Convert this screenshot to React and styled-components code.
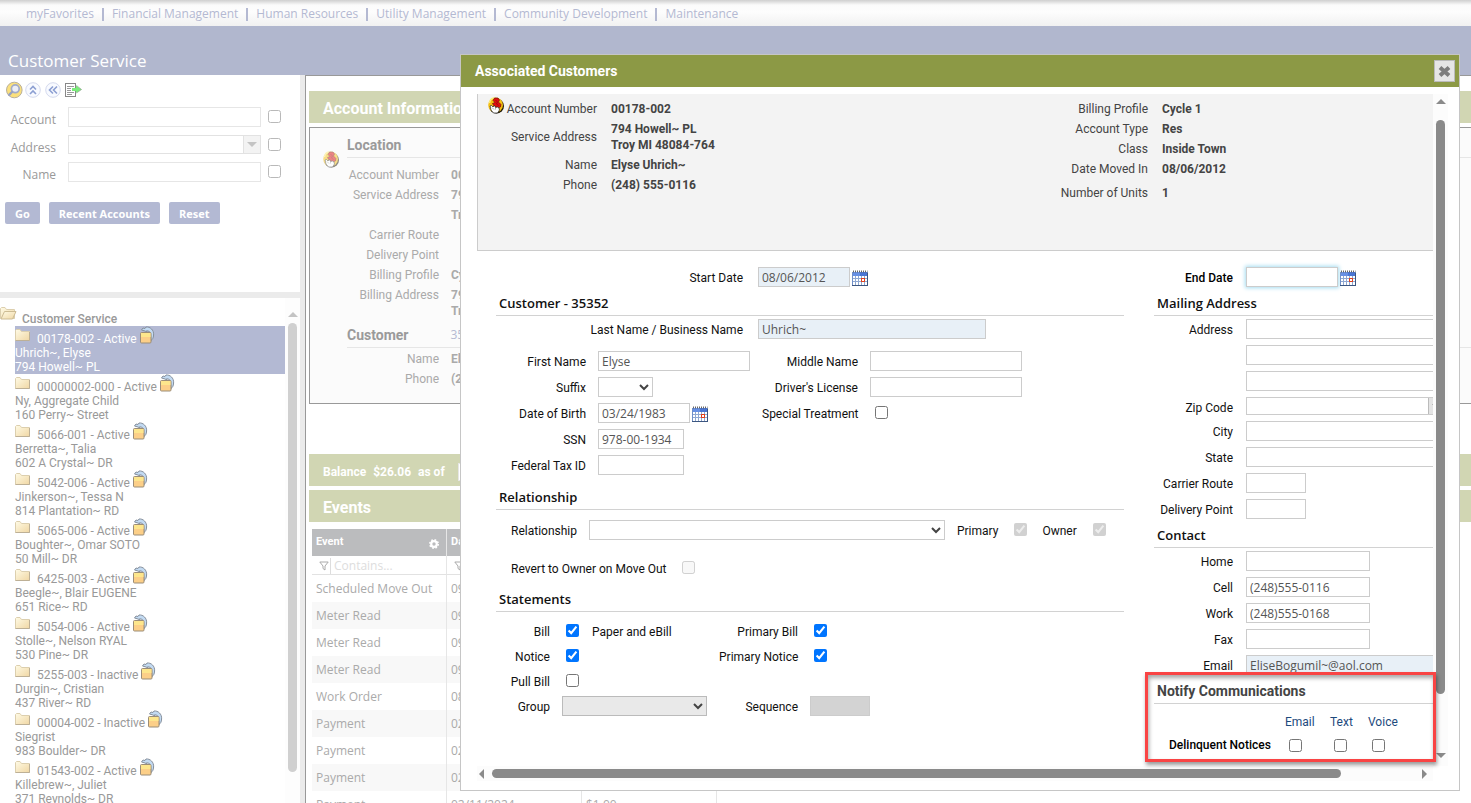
import React from 'react';
import styled, { createGlobalStyle, css } from 'styled-components';

const ui = '"Roboto", "Liberation Sans", sans-serif';
const humanist = '"Open Sans", "Noto Sans", sans-serif';

const GlobalStyle = createGlobalStyle`
  * { box-sizing: border-box; }
  html, body { margin: 0; height: 100%; overflow: hidden; background: #fff; }
  body { font: 12px/16px ${ui}; color: #999; }
  input, select, button { font: inherit; margin: 0; }
  ul, dl, dd, h1, h2, h3 { margin: 0; padding: 0; }
  svg { display: block; flex: none; }
`;

/* ---------- page frame ---------- */
const Page = styled.div`
  position: relative;
  height: 100vh;
  display: flex;
  flex-direction: column;
  overflow: hidden;
`;
const NavBar = styled.nav`
  flex: none;
  height: 26px;
  padding: 2px 0 0 26px;
  display: flex;
  align-items: center;
  background: linear-gradient(#cfcfcf, #fbfbfb 5px, #fdfdfd 12px, #f1f1f1);
  font: 12px/20px ${humanist};
`;
const NavLink = styled.a`
  color: #b4b9d2;
  text-decoration: none;
  & + &::before {
    content: '';
    display: inline-block;
    width: 2px;
    height: 13px;
    margin: 0 8px;
    vertical-align: -3px;
    background: #b4b9d2;
  }
`;
const TitleBar = styled.header`
  flex: none;
  height: 49px;
  padding: 23px 8px 0;
  background: #b1b7ce;
`;
const Title = styled.h1`
  font: 400 17px/24px ${humanist};
  color: #fff;
`;
const Columns = styled.div`
  flex: 1;
  min-height: 0;
  display: flex;
`;

/* ---------- side panel ---------- */
const Side = styled.aside`
  width: 305px;
  flex: none;
  display: flex;
  flex-direction: column;
  border-right: 5px solid #ebebeb;
`;
const Search = styled.form`
  flex: none;
  height: 223px;
  padding: 6px 5px 0;
  border-bottom: 6px solid #ebebeb;
  font: 12px/20px ${humanist};
`;
const Tools = styled.div`
  display: flex;
  gap: 4px;
  height: 26px;
`;
const ToolButton = styled.button`
  padding: 0;
  border: 0;
  width: 16px;
  height: 18px;
  background: none;
`;
const SearchRows = styled.div`
  display: grid;
  grid-template-columns: 51px 193px 13px;
  column-gap: 12px;
  row-gap: 8px;
  & > * + input[type='checkbox'] { margin-left: -5px; }
`;
const SearchLabel = styled.label`
  padding-top: 6px;
  text-align: right;
  line-height: 13px;
`;
const Tick = styled.input.attrs({ type: 'checkbox' })`
  width: 13px;
  height: 13px;
  margin-top: 3px;
  opacity: ${(p) => (p.$faded ? 0.5 : 1)};
`;
const SearchBox = styled.input`
  min-width: 0;
  height: 20px;
  border: 1px solid #e6e6e6;
  background: #fff;
`;
const Combo = styled.div`
  display: flex;
  height: ${(p) => (p.$strong ? '18px' : '19px')};
  border: 1px solid ${(p) => (p.$strong ? '#ccc' : '#e2e2e2')};
  input { flex: 1; min-width: 0; border: 0; background: #fff; }
  button {
    width: 17px;
    padding: 0;
    display: grid;
    place-items: center;
    border: 0;
    border-left: 1px solid ${(p) => (p.$strong ? '#bbb' : '#e2e2e2')};
    background: ${(p) => (p.$strong ? '#e4e4e4' : '#f3f3f3')};
  }
`;
const Actions = styled.div`
  display: flex;
  gap: 9px;
  padding-top: 20px;
`;
const ActionButton = styled.button`
  height: 22px;
  padding: 2px 10px 0;
  border: 0;
  border-radius: 2px;
  background: #b3b9d3;
  color: #fff;
  font: 700 11px/20px ${humanist};
`;
const TreeArea = styled.div`
  flex: 1;
  min-height: 0;
  display: flex;
  overflow: hidden;
`;
const Tree = styled.div`
  flex: 1;
  padding-top: 9px;
`;
const TreeRoot = styled.h2`
  display: flex;
  gap: 5px;
  height: 19px;
  font: 500 12px/16px ${ui};
  color: #999;
  span { padding-top: 4px; }
`;
const TreeList = styled.ul`
  list-style: none;
  margin-left: 15px;
`;
const TreeItem = styled.li`
  height: 48px;
  line-height: 14px;
  color: ${(p) => (p.$selected ? '#fff' : '#999')};
  background: ${(p) => (p.$selected ? '#b3b9d3' : 'transparent')};
`;
const TreeHead = styled.div`
  display: flex;
  height: 20px;
  & > span { padding: 6px 2px 0 6px; }
  & > svg:first-child { margin-top: 3px; }
`;
const VBar = styled.div`
  width: 15px;
  flex: none;
  display: flex;
  flex-direction: column;
  align-items: center;
  gap: ${(p) => (p.$strong ? '16px' : '6px')};
  padding: ${(p) => (p.$strong ? '5px 0 8px' : '14px 0 31px')};
  background: ${(p) => (p.$strong ? '#fcfcfc' : '#fdfdfd')};
`;
const HBar = styled.div`
  display: flex;
  align-items: center;
  gap: 8px;
  padding: 0 6px 0 2px;
  background: #fcfcfc;
`;
const Thumb = styled.div`
  border-radius: 5px;
  background: ${(p) => (p.$strong ? '#8a8a8a' : '#d0d0d0')};
  ${(p) => (p.$horizontal
    ? css`flex: 849; height: 9px;`
    : css`flex: 574; width: 9px;`)}
`;
const Slack = styled.div`
  flex: ${(p) => p.$grow};
`;

/* ---------- account page behind the dialog ---------- */
const Main = styled.main`
  flex: 1;
  min-width: 0;
  overflow: hidden;
  padding: 15px 0 0 3px;
  border-left: 1px solid #999;
  border-top: 1px solid #999;
`;
const Band = styled.h2`
  height: 32px;
  margin-bottom: 4px;
  padding: 3px 14px 0;
  display: flex;
  align-items: center;
  gap: ${(p) => (p.$small ? '7px' : '0')};
  background: #d1d6b3;
  color: #fff;
  font: 700 ${(p) => (p.$small ? '12px' : '16px')}/20px ${ui};
  input {
    width: 80px;
    height: 18px;
    margin-left: 6px;
    border: 1px solid #e6e6e6;
  }
`;
const AccountBox = styled.section`
  display: flex;
  gap: 8px;
  margin-bottom: 50px;
  padding: 7px 0 16px 13px;
  border: 1px solid #999;
  border-right: 0;
  background: #fbfbfb;
  & > svg { margin-top: 16px; }
`;
const AccountInfo = styled.div`
  flex: 1;
`;
const SubHeading = styled.h3`
  display: flex;
  gap: 42px;
  margin: ${(p) => p.$above || 0}px 0 ${(p) => p.$below}px;
  padding-bottom: 2px;
  border-bottom: 1px solid #e6e6e6;
  font: 700 14px/20px ${ui};
  color: #9a9a9a;
  a { font: 400 12px/20px ${humanist}; color: #b4b9d2; text-decoration: none; }
`;
const Facts = styled.dl`
  display: grid;
  grid-template-columns: ${(p) => p.$label || 92}px auto;
  justify-content: start;
  align-content: start;
  column-gap: ${(p) => p.$gap || 12}px;
  row-gap: 4px;
  color: ${(p) => p.$color || '#aaa'};
  dt { display: flex; justify-content: flex-end; align-items: flex-start; white-space: nowrap; min-height: 16px; }
  dd { font-weight: 700; }
`;
const Grid = styled.table`
  width: 405px;
  margin: 7px 0 0 3px;
  table-layout: fixed;
  border-collapse: separate;
  border-spacing: 0;
  font: 12px/16px ${humanist};
  color: #aaa;
  th, td { height: 27px; padding: 0 4px; text-align: left; border-right: 1px solid #e6e6e6; white-space: nowrap; }
  th { padding: 0 7px 0 4px; background: #bbbcbe; color: #fff; font: 700 11px/12px ${ui}; }
  td { padding-top: 1px; }
  tbody tr:nth-child(even) td { background: #f8f8f8; }
`;
const HeadCell = styled.div`
  display: flex;
  justify-content: space-between;
  align-items: flex-start;
  svg { margin-top: 3px; }
`;
const FilterRow = styled.tr`
  td { height: 19px; border-bottom: 1px solid #e2e2e2; padding: 1px 2px 0 7px; }
`;
const Filter = styled.div`
  display: flex;
  align-items: center;
  gap: 1px;
  input { width: 90px; height: 16px; padding: 0 3px; border: 0; border-left: 1px solid #ddd; background: none; }
  input::placeholder { color: #ddd; }
`;

/* ---------- dialog ---------- */
const Dialog = styled.section`
  position: absolute;
  inset: 54px 11px 12px 460px;
  display: flex;
  flex-direction: column;
  border: 1px solid #c6c6c6;
  background: #fff;
  color: #111;
`;
const DialogHead = styled.header`
  flex: none;
  height: 32px;
  padding: 0 4px 0 14px;
  display: flex;
  justify-content: space-between;
  align-items: center;
  background: #8c9945;
  color: #fff;
  h2 { font: 700 14px/20px ${ui}; }
`;
const CloseButton = styled.button`
  width: 21px;
  height: 22px;
  padding: 0;
  display: grid;
  place-items: center;
  border: 1px solid #bbb;
  background: #e6e6e6;
`;
const DialogBody = styled.div`
  flex: 1;
  min-height: 0;
  padding: 7px 11px 9px 16px;
  display: grid;
  grid-template-columns: minmax(0, 1fr) 15px;
  grid-template-rows: minmax(0, 1fr) 15px;
`;
const Viewport = styled.div`
  overflow: hidden;
`;
const Content = styled.div`
  width: 1050px;
`;
const Summary = styled.div`
  display: grid;
  grid-template-columns: 555px 1fr;
  height: 157px;
  padding: 7px 0 0 10px;
  border-left: 1px solid #ccc;
  border-bottom: 1px solid #ccc;
  background: #f3f3f3;
  dt { height: 16px; align-self: center; }
  dt svg { margin: -4px 3px 0 0; }
`;
const UnitsTerm = styled.dt`
  && { margin-top: 4px; }
`;
const UnitsValue = styled.dd`
  && { margin-top: 4px; }
`;
const Form = styled.form`
  display: grid;
  grid-template-columns: 628px 1fr;
  column-gap: 30px;
  padding: 16px 0 0 19px;
`;
const Heading = styled.h3`
  margin: ${(p) => p.$above}px 0 ${(p) => p.$below}px;
  padding: 0 3px 2px;
  border-bottom: 1px solid #d2d2d2;
  font: ${(p) => (p.$dark ? `700 14px/20px ${ui}` : `600 13px/20px ${humanist}`)};
  color: ${(p) => (p.$dark ? '#444' : '#111')};
`;
const Fields = styled.div`
  display: grid;
  grid-template-columns: ${(p) => p.$cols};
  grid-auto-rows: minmax(${(p) => p.$min || 18}px, auto);
  column-gap: ${(p) => p.$gap}px;
  row-gap: ${(p) => (p.$rows === undefined ? 6 : p.$rows)}px;
  margin-bottom: ${(p) => p.$below || 0}px;
  justify-content: start;
`;
const Label = styled.label`
  padding-top: 4px;
  line-height: 14px;
  text-align: ${(p) => (p.$left ? 'left' : 'right')};
  font-weight: ${(p) => (p.$strong ? 500 : 400)};
  color: ${(p) => (p.$strong ? '#000' : '#111')};
  white-space: nowrap;
`;
const Box = styled.input`
  width: ${(p) => p.$w}px;
  height: 20px;
  padding: 0 3px;
  border: 1px solid #ccc;
  outline: 0;
  background: ${(p) => (p.$tone === 'blue' ? '#e8f0f7' : p.$tone === 'grey' ? '#d3d3d3' : '#fff')};
  color: #555;
  font: 12px/16px ${humanist};
  box-shadow: ${(p) => (p.$glow ? '0 0 4px 1px #a5dcf0' : 'none')};
`;
const Pick = styled.select`
  width: ${(p) => p.$w}px;
  height: 20px;
  border: 1px solid ${(p) => (p.disabled ? '#bbb' : '#ccc')};
  border-radius: 0;
  background-color: ${(p) => (p.disabled ? '#e9e9e9' : '#fff')};
  color: #444;
  opacity: 1;
`;
const Inline = styled.div`
  display: flex;
  gap: ${(p) => p.$gap || 2}px;
  padding: 0 ${(p) => p.$after || 0}px 0 ${(p) => p.$indent || 0}px;
  & > svg { margin-top: 3px; }
`;
const RevertRow = styled.div`
  display: flex;
  gap: 15px;
  height: 19px;
  margin-top: 18px;
  padding-left: 15px;
`;
const Notices = styled.table`
  width: 244px;
  margin: 10px 0 0 15px;
  table-layout: fixed;
  border-spacing: 0;
  td, th { padding: 0; font-weight: 400; text-align: left; height: 16px; }
  thead th { color: #1d4a7d; }
  tbody th { font-weight: 500; color: #000; white-space: nowrap; }
  tbody tr > * { height: 30px; }
  input { display: block; margin: 0 0 0 4px; }
`;
const Callout = styled.div`
  position: absolute;
  right: 23px;
  bottom: 28px;
  width: 291px;
  height: 90px;
  border: 3px solid #f94444;
  box-shadow: 1px 3px 4px rgba(0, 0, 0, 0.4), inset 1px 3px 4px rgba(0, 0, 0, 0.35);
  pointer-events: none;
`;

/* ---------- drawings ---------- */
const Arrow = ({ dir, color }) => {
  const d = { up: 'M0 5L5 0L10 5Z', down: 'M0 0L5 5L10 0Z', left: 'M5 0L0 5L5 10Z', right: 'M0 0L5 5L0 10Z' }[dir];
  const flat = dir === 'up' || dir === 'down';
  return (
    <svg width={flat ? 10 : 5} height={flat ? 5 : 10} aria-hidden="true"><path d={d} fill={color} /></svg>
  );
};
const SearchIcon = () => (
  <svg width="18" height="18" viewBox="0 0 18 18">
    <circle cx="9.300" cy="9" r="7.800" fill="#fbe07c" stroke="#b9b09c" />
    <circle cx="10.300" cy="7.800" r="3.900" fill="#eceef6" stroke="#a3acc8" strokeWidth="1.700" />
    <path d="M7 11L4.200 13.800" stroke="#98a2c2" strokeWidth="2.400" strokeLinecap="round" />
  </svg>
);
const RoundChevrons = ({ up }) => (
  <svg width="16" height="18" viewBox="0 0 16 18">
    <circle cx="8" cy="9" r="7.3" fill="#f8faff" stroke="#d5daee" />
    <path
      d={up ? 'M5 8.500L8 5.500L11 8.500M5 13L8 10L11 13' : 'M8 5.500L4.500 9L8 12.500M12 5.500L8.500 9L12 12.500'}
      fill="none" stroke="#8c9fd2" strokeWidth="1.600"
    />
  </svg>
);
const ExportIcon = () => (
  <svg width="18" height="18" viewBox="0 0 18 18">
    <rect x="0.500" y="2.500" width="10" height="13" fill="#fff" stroke="#888" />
    <path d="M2 5.500H9M2 7.500H6M2 9.500H6M2 11.500H9M2 13.500H7" stroke="#999" />
    <path d="M7 7H11V4.500L16.500 8.500L11 12V10H7Z" fill="#7bec7b" />
    <path d="M11.500 4.500L16.500 8.500L11.500 12" fill="none" stroke="#8aa08a" strokeWidth=".7" />
  </svg>
);
const CoinIcon = ({ faded }) => (
  <svg width="16" height="17" viewBox="0 0 16 17" opacity={faded ? 0.5 : 1}>
    <circle cx="8.500" cy="9" r="7.500" fill="#221a08" />
    <circle cx="7.600" cy="8" r="7.400" fill="#f6c012" />
    <path d="M1.500 6C2 3 4 1.200 6 1" fill="none" stroke="#fdec7a" strokeWidth="1.500" />
    <path d="M5 3.500L6.500 1L10 1L11.500 3L10.500 5L13 7.500L12.500 10L10 11L6 9L4.500 6.500L7 5.500Z" fill="#e20d0d" stroke="#5c0a0a" strokeWidth=".6" />
    <path d="M7.500 3L9.500 5L8.500 7L10.500 8.500" fill="none" stroke="#8a0c0c" strokeWidth=".8" />
    <path d="M2 9L3.500 8.500L5 10L6.500 8.500L7.500 10.500L9.500 10L11 11L11.500 13L9.500 16L5.500 16L3 13Z" fill="#fff" stroke="#222" strokeWidth=".7" />
    <path d="M4 10.500L6 12.500M7.500 10.500L7.500 12.500" stroke="#777" strokeWidth=".6" />
  </svg>
);
const CalendarIcon = () => (
  <svg width="16" height="16" viewBox="0 0 16 16">
    <rect x="0.500" y="2.500" width="15" height="13" fill="#fff" stroke="#6f8fc8" />
    <rect x="1" y="2" width="14" height="4" fill="#6790e4" />
    <rect x="8" y="2" width="7" height="4" fill="#4a76d4" />
    <path d="M1 1.500H15.500" stroke="#666" strokeWidth="2" strokeDasharray="1 1" />
    <path d="M3.500 6V15M6.500 6V15M9.500 6V15M12.500 6V15M1 8.500H15M1 11.500H15" stroke="#8fa8d2" />
    <rect x="9.500" y="8.500" width="3" height="3" fill="#fff" stroke="#e0401c" />
    <path d="M0 15.500H16M15.500 3V16" stroke="#3c5680" />
  </svg>
);
const FolderIcon = ({ open }) => (
  <svg width={open ? 17 : 16} height="13" viewBox={open ? '0 0 17 13' : '0 0 16 13'}>
    <defs>
      <linearGradient id="folderFill" x1="0" y1="0" x2="1" y2="1">
        <stop offset="0" stopColor="#fffbe6" />
        <stop offset="1" stopColor="#f0d7a4" />
      </linearGradient>
    </defs>
    <path d="M0.500 11.500V1.500L1.500 0.500H5L6.500 2.500H14.500V11.500Z" fill="url(#folderFill)" stroke="#dccfae" />
    {open
      ? <path d="M1 12L4.500 4.500H16L12.500 12Z" fill="url(#folderFill)" stroke="#cdbc94" />
      : <path d="M0.500 11.500H14.500V3" fill="none" stroke="#bdb096" />}
  </svg>
);
const MoveIcon = () => (
  <svg width="16" height="18" viewBox="0 0 16 18">
    <path d="M2.500 4L4 2L6 2.500L7 1C11 0.500 15 4 14.600 9C14.400 12 13.500 13.500 12 14.500L11.500 7.500C11 5.500 9.500 4.800 7.500 4.800L8 6L6 5Z" fill="#c2daf2" stroke="#858f9c" />
    <rect x="1.500" y="6.500" width="10.500" height="10.500" rx="1" fill="#fccf88" stroke="#9b8d78" />
    <path d="M2 7H11.500V11H2Z" fill="#fde68c" />
  </svg>
);
const GearIcon = () => (
  <svg width="10" height="10" viewBox="0 0 10 10">
    <circle cx="5" cy="5" r="2.800" fill="none" stroke="#fff" strokeWidth="2.200" />
    <circle cx="5" cy="5" r="4.200" fill="none" stroke="#fff" strokeWidth="1.600" strokeDasharray="1.650 1.650" />
  </svg>
);
const FunnelIcon = () => (
  <svg width="10" height="10" viewBox="0 0 10 10">
    <path d="M0.800 1H9.200L6 5V9L4 7.500V5Z" fill="none" stroke="#aaa" />
  </svg>
);
const CloseIcon = () => (
  <svg width="13" height="13" viewBox="0 0 13 13">
    <path d="M2 2.500L11 10.500M11 2.500L2 10.500" stroke="#7d7d7d" strokeWidth="4" />
  </svg>
);

/* ---------- data ---------- */
const menu = ['myFavorites', 'Financial Management', 'Human Resources', 'Utility Management', 'Community Development', 'Maintenance'];
const accounts = [
  ['00178-002 - Active', 'Uhrich~, Elyse', '794 Howell~ PL'],
  ['00000002-000 - Active', 'Ny, Aggregate Child', '160 Perry~ Street'],
  ['5066-001 - Active', 'Berretta~, Talia', '602 A Crystal~ DR'],
  ['5042-006 - Active', 'Jinkerson~, Tessa N', '814 Plantation~ RD'],
  ['5065-006 - Active', 'Boughter~, Omar SOTO', '50 Mill~ DR'],
  ['6425-003 - Active', 'Beegle~, Blair EUGENE', '651 Rice~ RD'],
  ['5054-006 - Active', 'Stolle~, Nelson RYAL', '530 Pine~ DR'],
  ['5255-003 - Inactive', 'Durgin~, Cristian', '437 River~ RD'],
  ['00004-002 - Inactive', 'Siegrist', '983 Boulder~ DR'],
  ['01543-002 - Active', 'Killebrew~, Juliet', '371 Reynolds~ DR'],
];
const events = [
  ['Scheduled Move Out', '09', ''], ['Meter Read', '09', ''], ['Meter Read', '09', ''], ['Meter Read', '09', ''],
  ['Work Order', '08', ''], ['Payment', '02', ''], ['Payment', '02', ''], ['Payment', '02', ''],
  ['Payment', '02/11/2024', '$1.00'],
];

function SidePanel() {
  return (
    <Side>
      <Search>
        <Tools>
          <ToolButton type="button" aria-label="Search"><SearchIcon /></ToolButton>
          <ToolButton type="button" aria-label="Collapse up"><RoundChevrons up /></ToolButton>
          <ToolButton type="button" aria-label="Collapse left"><RoundChevrons /></ToolButton>
          <ToolButton type="button" aria-label="Export"><ExportIcon /></ToolButton>
        </Tools>
        <SearchRows>
          <SearchLabel htmlFor="s-account">Account</SearchLabel>
          <SearchBox id="s-account" />
          <Tick $faded aria-label="Keep account" />
          <SearchLabel htmlFor="s-address">Address</SearchLabel>
          <Combo>
            <input id="s-address" />
            <button type="button" aria-label="Show addresses"><Arrow dir="down" color="#c4c4c4" /></button>
          </Combo>
          <Tick $faded aria-label="Keep address" />
          <SearchLabel htmlFor="s-name">Name</SearchLabel>
          <SearchBox id="s-name" />
          <Tick $faded aria-label="Keep name" />
        </SearchRows>
        <Actions>
          <ActionButton type="button">Go</ActionButton>
          <ActionButton type="button">Recent Accounts</ActionButton>
          <ActionButton type="button">Reset</ActionButton>
        </Actions>
      </Search>
      <TreeArea>
        <Tree>
          <TreeRoot><FolderIcon open /><span>Customer Service</span></TreeRoot>
          <TreeList>
            {accounts.map(([head, name, street], i) => (
              <TreeItem key={head} $selected={i === 0}>
                <TreeHead><FolderIcon /><span>{head}</span><MoveIcon /></TreeHead>
                <div>{name}</div>
                <div>{street}</div>
              </TreeItem>
            ))}
          </TreeList>
        </Tree>
        <VBar><Arrow dir="up" color="#c4c4c4" /><Thumb /></VBar>
      </TreeArea>
    </Side>
  );
}

function AccountPage() {
  return (
    <Main>
      <Band>Account Information</Band>
      <AccountBox>
        <CoinIcon faded />
        <AccountInfo>
          <SubHeading $below={9}>Location</SubHeading>
          <Facts>
            <dt>Account Number</dt><dd>00178-002</dd>
            <dt>Service Address</dt><dd>794 Howell~ PL</dd>
            <dt /><dd>Troy MI</dd>
            <dt>Carrier Route</dt><dd />
            <dt>Delivery Point</dt><dd />
            <dt>Billing Profile</dt><dd>Cycle 1</dd>
            <dt>Billing Address</dt><dd>794<br />Troy</dd>
          </Facts>
          <SubHeading $above={6} $below={3}>Customer<a href="#customer">35352</a></SubHeading>
          <Facts>
            <dt>Name</dt><dd>Elyse</dd>
            <dt>Phone</dt><dd>(248)</dd>
          </Facts>
        </AccountInfo>
      </AccountBox>
      <Band $small>
        <label htmlFor="asof">Balance</label><span>$26.06</span><span>as of</span><input id="asof" />
      </Band>
      <Band>Events</Band>
      <Grid>
        <thead>
          <tr>
            <th><HeadCell>Event<GearIcon /></HeadCell></th>
            <th><HeadCell>Date<GearIcon /></HeadCell></th>
            <th><HeadCell>Amount<GearIcon /></HeadCell></th>
          </tr>
          <FilterRow>
            <td><Filter><FunnelIcon /><input placeholder="Contains..." aria-label="Filter events" /></Filter></td>
            <td><Filter><FunnelIcon /></Filter></td>
            <td />
          </FilterRow>
        </thead>
        <tbody>
          {events.map(([kind, date, amount], i) => (
            <tr key={i}><td>{kind}</td><td>{date}</td><td>{amount}</td></tr>
          ))}
        </tbody>
      </Grid>
    </Main>
  );
}

function DateField({ id, value, tone, glow }) {
  return (
    <Inline>
      <Box id={id} $w={92} $tone={tone} $glow={glow} defaultValue={value} />
      <CalendarIcon />
    </Inline>
  );
}

function LeftForm() {
  return (
    <div>
      <Fields $cols="247px auto" $gap={15}>
        <Label htmlFor="start">Start Date</Label>
        <DateField id="start" value="08/06/2012" tone="blue" />
      </Fields>
      <Heading $above={6} $below={3}>Customer - 35352</Heading>
      <Fields $cols="247px auto" $gap={15} $below={12}>
        <Label htmlFor="last">Last Name / Business Name</Label>
        <Box id="last" $w={228} $tone="blue" defaultValue="Uhrich~" />
      </Fields>
      <Fields $cols="90px 152px 96px auto" $gap={12}>
        <Label htmlFor="first">First Name</Label>
        <Box id="first" $w={152} defaultValue="Elyse" />
        <Label htmlFor="middle">Middle Name</Label>
        <Box id="middle" $w={152} />
        <Label htmlFor="suffix">Suffix</Label>
        <Pick id="suffix" $w={55} />
        <Label htmlFor="license">Driver's License</Label>
        <Box id="license" $w={152} />
        <Label htmlFor="dob">Date of Birth</Label>
        <DateField id="dob" value="03/24/1983" />
        <Label htmlFor="special">Special Treatment</Label>
        <Inline $indent={5}><Tick id="special" /></Inline>
        <Label htmlFor="ssn">SSN</Label>
        <Box id="ssn" $w={86} defaultValue="978-00-1934" />
        <span /><span />
        <Label htmlFor="tax">Federal Tax ID</Label>
        <Box id="tax" $w={86} />
      </Fields>
      <Heading $above={12} $below={10}>Relationship</Heading>
      <Inline $gap={12} $indent={15}>
        <Label htmlFor="relation">Relationship</Label>
        <Pick id="relation" $w={356} />
        <Label htmlFor="primary">Primary</Label>
        <Inline $indent={4} $after={3}><Tick id="primary" disabled defaultChecked /></Inline>
        <Label htmlFor="owner">Owner</Label>
        <Inline $indent={4}><Tick id="owner" disabled defaultChecked /></Inline>
      </Inline>
      <RevertRow>
        <Label htmlFor="revert">Revert to Owner on Move Out</Label>
        <Tick id="revert" disabled />
      </RevertRow>
      <Heading $above={12} $below={9}>Statements</Heading>
      <Fields $cols="54px 145px 79px auto" $gap={12} $rows={5} $min={20}>
        <Label htmlFor="bill">Bill</Label>
        <Inline $gap={13} $indent={4}>
          <Tick id="bill" defaultChecked />
          <Label as="span" $left>Paper and eBill</Label>
        </Inline>
        <Label htmlFor="pbill">Primary Bill</Label>
        <Inline $indent={4}><Tick id="pbill" defaultChecked /></Inline>
        <Label htmlFor="notice">Notice</Label>
        <Inline $indent={4}><Tick id="notice" defaultChecked /></Inline>
        <Label htmlFor="pnotice">Primary Notice</Label>
        <Inline $indent={4}><Tick id="pnotice" defaultChecked /></Inline>
        <Label htmlFor="pull">Pull Bill</Label>
        <Inline $indent={4}><Tick id="pull" /></Inline>
        <span /><span />
        <Label htmlFor="group">Group</Label>
        <Pick id="group" $w={145} disabled />
        <Label htmlFor="sequence">Sequence</Label>
        <Box id="sequence" $w={60} $tone="grey" disabled />
      </Fields>
    </div>
  );
}

function RightForm() {
  const cols = '79px minmax(0, 1fr)';
  return (
    <div>
      <Fields $cols={cols} $gap={13}>
        <Label htmlFor="end" $strong>End Date</Label>
        <DateField id="end" glow />
      </Fields>
      <Heading $above={6} $below={3}>Mailing Address</Heading>
      <Fields $cols={cols} $gap={13}>
        <Label htmlFor="addr1">Address</Label><Box id="addr1" $w={228} />
        <span /><Box aria-label="Address line 2" $w={228} />
        <span /><Box aria-label="Address line 3" $w={228} />
        <Label htmlFor="zip">Zip Code</Label>
        <ZipCombo $strong>
          <input id="zip" /><button type="button" aria-label="Show zip codes"><Arrow dir="down" color="#888" /></button>
        </ZipCombo>
        <Label htmlFor="city">City</Label><Box id="city" $w={228} />
        <Label htmlFor="state">State</Label><Box id="state" $w={228} />
        <Label htmlFor="route">Carrier Route</Label><Box id="route" $w={60} />
        <Label htmlFor="point">Delivery Point</Label><Box id="point" $w={60} />
      </Fields>
      <Heading $above={6} $below={3}>Contact</Heading>
      <Fields $cols={cols} $gap={13}>
        <Label htmlFor="home">Home</Label><Box id="home" $w={124} />
        <Label htmlFor="cell">Cell</Label><Box id="cell" $w={124} defaultValue="(248)555-0116" />
        <Label htmlFor="work">Work</Label><Box id="work" $w={124} defaultValue="(248)555-0168" />
        <Label htmlFor="fax">Fax</Label><Box id="fax" $w={124} />
        <Label htmlFor="email">Email</Label>
        <Box id="email" $w={228} $tone="blue" defaultValue="EliseBogumil~@aol.com" />
      </Fields>
      <Heading $dark $above={6} $below={0}>Notify Communications</Heading>
      <Notices>
        <colgroup><col width="116" /><col width="45" /><col width="38" /><col width="45" /></colgroup>
        <thead><tr><td /><th>Email</th><th>Text</th><th>Voice</th></tr></thead>
        <tbody>
          <tr>
            <th>Delinquent Notices</th>
            <td><Tick aria-label="Delinquent notices by email" /></td>
            <td><Tick aria-label="Delinquent notices by text" /></td>
            <td><Tick aria-label="Delinquent notices by voice" /></td>
          </tr>
        </tbody>
      </Notices>
    </div>
  );
}
const ZipCombo = styled(Combo)`
  width: 200px;
`;

function CustomersDialog() {
  return (
    <Dialog role="dialog" aria-label="Associated Customers">
      <DialogHead>
        <h2>Associated Customers</h2>
        <CloseButton type="button" aria-label="Close"><CloseIcon /></CloseButton>
      </DialogHead>
      <DialogBody>
        <Viewport>
          <Content>
            <Summary>
              <Facts $label={109} $gap={14} $color="#444">
                <dt><CoinIcon />Account Number</dt><dd>00178-002</dd>
                <dt>Service Address</dt><dd>794 Howell~ PL<br />Troy MI 48084-764</dd>
                <dt>Name</dt><dd>Elyse Uhrich~</dd>
                <dt>Phone</dt><dd>(248) 555-0116</dd>
              </Facts>
              <Facts $label={105} $gap={14} $color="#444">
                <dt>Billing Profile</dt><dd>Cycle 1</dd>
                <dt>Account Type</dt><dd>Res</dd>
                <dt>Class</dt><dd>Inside Town</dd>
                <dt>Date Moved In</dt><dd>08/06/2012</dd>
                <UnitsTerm>Number of Units</UnitsTerm><UnitsValue>1</UnitsValue>
              </Facts>
            </Summary>
            <Form>
              <LeftForm />
              <RightForm />
            </Form>
          </Content>
        </Viewport>
        <VBar $strong>
          <Arrow dir="up" color="#8a8a8a" />
          <Thumb $strong />
          <Slack $grow={27} />
          <Arrow dir="down" color="#8a8a8a" />
        </VBar>
        <HBar>
          <Arrow dir="left" color="#8a8a8a" />
          <Thumb $strong $horizontal />
          <Slack $grow={65} />
          <Arrow dir="right" color="#8a8a8a" />
        </HBar>
      </DialogBody>
      <Callout />
    </Dialog>
  );
}

export default function App() {
  return (
    <Page>
      <GlobalStyle />
      <NavBar>
        {menu.map((item) => <NavLink key={item} href="#menu">{item}</NavLink>)}
      </NavBar>
      <TitleBar><Title>Customer Service</Title></TitleBar>
      <Columns>
        <SidePanel />
        <AccountPage />
      </Columns>
      <CustomersDialog />
    </Page>
  );
}
